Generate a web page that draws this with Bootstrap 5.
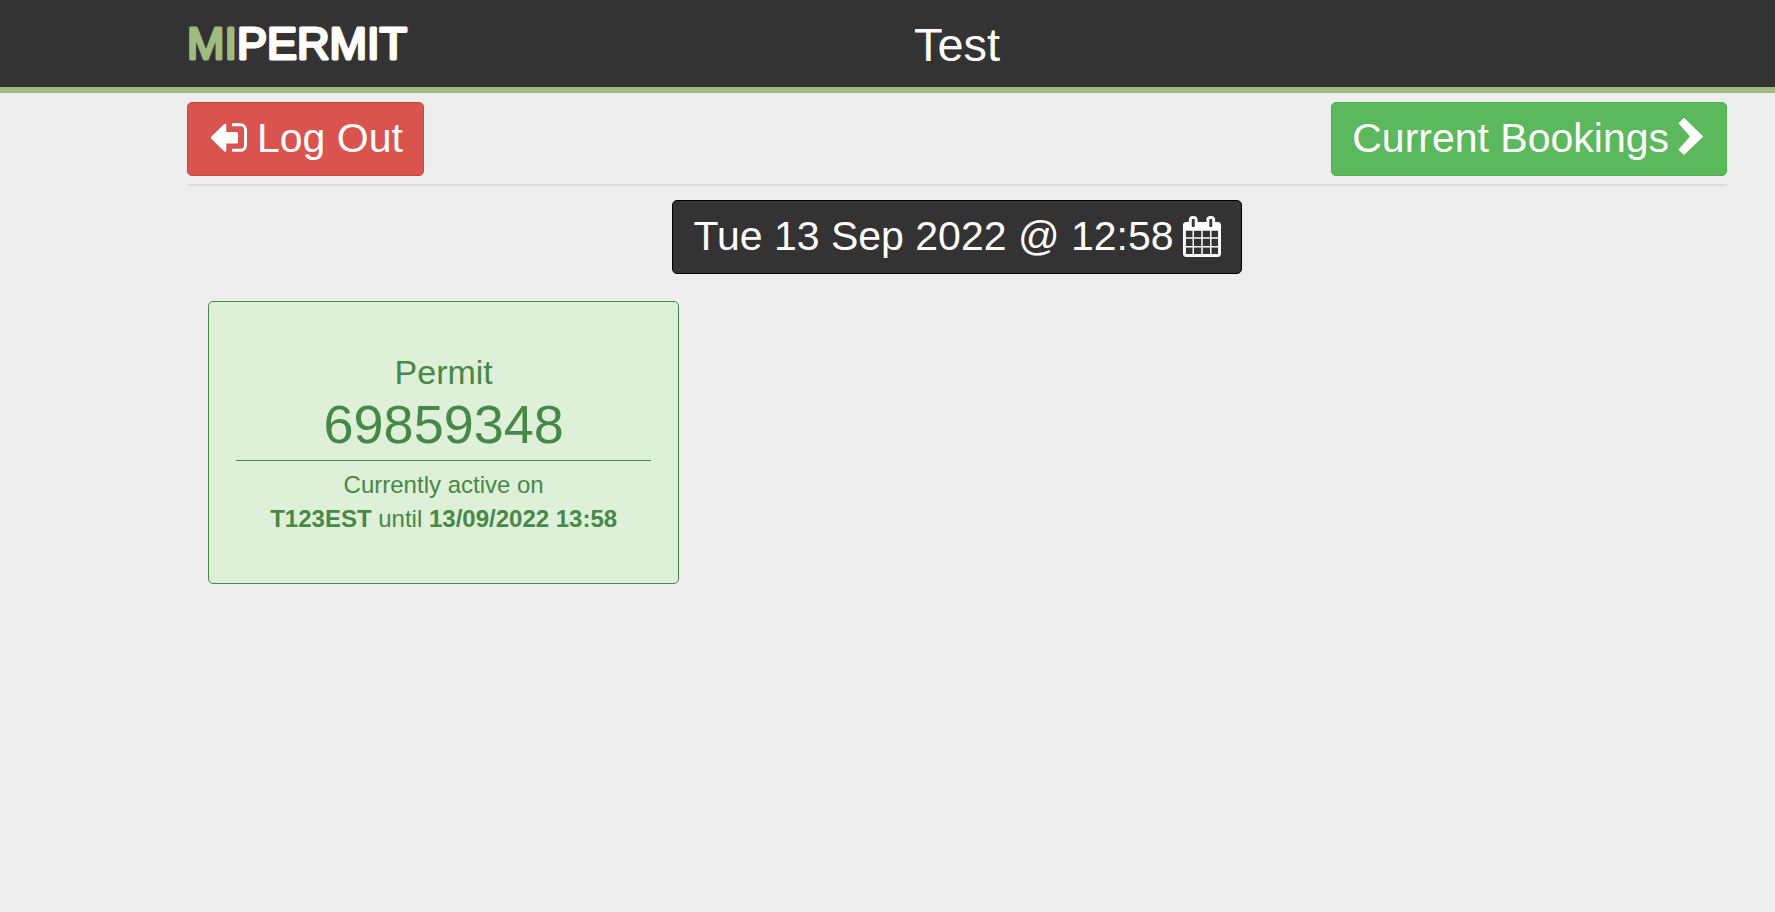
<!DOCTYPE html>
<html lang="en">
<head>
<meta charset="utf-8">
<meta name="viewport" content="width=device-width, initial-scale=1">
<title>MiPermit</title>
<link href="https://cdn.jsdelivr.net/npm/bootstrap@5.3.0/dist/css/bootstrap.min.css" rel="stylesheet">
<style>
body { background: #eee; font-family: "Liberation Sans", Arial, sans-serif; }
.page-pad { padding-left: 187px; padding-right: 48px; }
.topbar { background: #333; border-bottom: 6px solid #a0bb80; color: #fff; padding-top: 2px; }
.topbar-grid { display: grid; grid-template-columns: 1fr auto 1fr; align-items: center; }
.topbar h1 { font-size: 47px; line-height: 85px; font-weight: 400; }
.logo { overflow: visible; }
.logo text { font-family: "Liberation Sans", Arial, sans-serif; font-size: 45px; stroke-width: 3px; stroke-linejoin: round; stroke-linecap: round; fill: #fff; stroke: #fff; }
.logo .logo-mi { fill: #a0bb80; stroke: #a0bb80; }
.btn-kiosk { --bs-btn-color: #fff; --bs-btn-hover-color: #fff; --bs-btn-font-size: 41px; --bs-btn-line-height: 58px; --bs-btn-border-radius: 5px; padding: 6px 20px 8px; display: inline-flex; align-items: center; gap: 9px; white-space: nowrap; }
.btn-exit { --bs-btn-bg: #d9534f; --bs-btn-border-color: #d43f3a; --bs-btn-hover-bg: #c9302c; }
.btn-go { --bs-btn-bg: #5cb85c; --bs-btn-border-color: #4cae4c; --bs-btn-hover-bg: #449d44; }
.btn-date { --bs-btn-bg: #333; --bs-btn-border-color: #000; --bs-btn-hover-bg: #222; }
.actions { padding-top: 9px; padding-bottom: 8px; border-bottom: 2px solid #ddd; }
.date-row { padding: 14px 0 27px; }
.permit-row { --bs-gutter-x: 42px; margin: 0; }
.permit { background: #dff0d8; border: 1px solid #468847; border-radius: 5px; color: #468847; padding: 49px 27px 47px; font-size: 24px; line-height: 34px; }
.permit-label { font-size: 34px; line-height: 42px; }
.permit-number { font-size: 54px; line-height: 62px; padding-bottom: 5px; margin-bottom: 7px; border-bottom: 1px solid #468847; }
</style>
</head>
<body>
<header class="topbar page-pad">
  <div class="topbar-grid">
    <svg class="logo" width="226" height="56" role="img" aria-label="MiPermit"><text x="0" y="42"><tspan class="logo-mi">MI</tspan>PERMIT</text></svg>
    <h1 class="m-0">Test</h1>
  </div>
</header>
<main class="page-pad">
  <div class="actions d-flex flex-wrap justify-content-between">
    <button type="button" class="btn btn-kiosk btn-exit">
      <svg width="40" height="40" viewBox="0 0 40 40" aria-hidden="true"><path fill="#fff" d="M3.4 18.6 16 6.300q2.300-1.400 2.300 1V14H28.500q1.500 0 1.500 1.500v8.500q0 1.500-1.500 1.500H18.300v6.700q0 2.400-2.300 1L3.400 20.800q-1.100-1.100 0-2.200z"/><path fill="none" stroke="#fff" stroke-width="3" d="M24 6.800h8.500a5 5 0 0 1 5 5v15.500a5 5 0 0 1-5 5H24"/></svg>
      <span>Log Out</span>
    </button>
    <button type="button" class="btn btn-kiosk btn-go">
      <span>Current Bookings</span>
      <svg width="28" height="40" viewBox="0 0 28 40" aria-hidden="true"><path fill="#fff" stroke="#fff" stroke-width="1.500" stroke-linejoin="round" d="M1.500 5.300 6 .9 24.200 18.500 6 36 1.500 31.600 13 18.500z"/></svg>
    </button>
  </div>
  <div class="date-row text-center">
    <button type="button" class="btn btn-kiosk btn-date">
      <span>Tue 13 Sep 2022 @ 12:58</span>
      <svg width="38" height="41" viewBox="64 0 1664 1792" aria-hidden="true"><path fill="#fff" d="M192 1664h288v-288h-288v288zm352 0h320v-288h-320v288zm-352-352h288v-320h-288v320zm352 0h320v-320h-320v320zm-352-384h288v-288h-288v288zm736 736h320v-288h-320v288zm-384-736h320v-288h-320v288zm768 736h288v-288h-288v288zm-384-352h320v-320h-320v320zm-352-864v-288q0-13-9.500-22.500t-22.500-9.500h-64q-13 0-22.500 9.500t-9.500 22.500v288q0 13 9.500 22.500t22.500 9.500h64q13 0 22.500-9.500t9.500-22.500zm736 864h288v-320h-288v320zm-384-384h320v-288h-320v288zm384 0h288v-288h-288v288zm32-480v-288q0-13-9.500-22.500t-22.500-9.500h-64q-13 0-22.500 9.500t-9.500 22.500v288q0 13 9.500 22.500t22.500 9.500h64q13 0 22.500-9.500t9.500-22.500zm384-64v1280q0 52-38 90t-90 38h-1408q-52 0-90-38t-38-90v-1280q0-52 38-90t90-38h128v-96q0-66 47-113t113-47h64q66 0 113 47t47 113v96h384v-96q0-66 47-113t113-47h64q66 0 113 47t47 113v96h128q52 0 90 38t38 90z"/></svg>
    </button>
  </div>
  <div class="row permit-row">
    <div class="col-12 col-lg-4">
      <div class="permit text-center">
        <div class="permit-label">Permit</div>
        <div class="permit-number">69859348</div>
        <div>Currently active on</div>
        <div><strong>T123EST</strong> until <strong>13/09/2022 13:58</strong></div>
      </div>
    </div>
  </div>
</main>
<script src="https://cdn.jsdelivr.net/npm/bootstrap@5.3.0/dist/js/bootstrap.bundle.min.js"></script>
</body>
</html>
